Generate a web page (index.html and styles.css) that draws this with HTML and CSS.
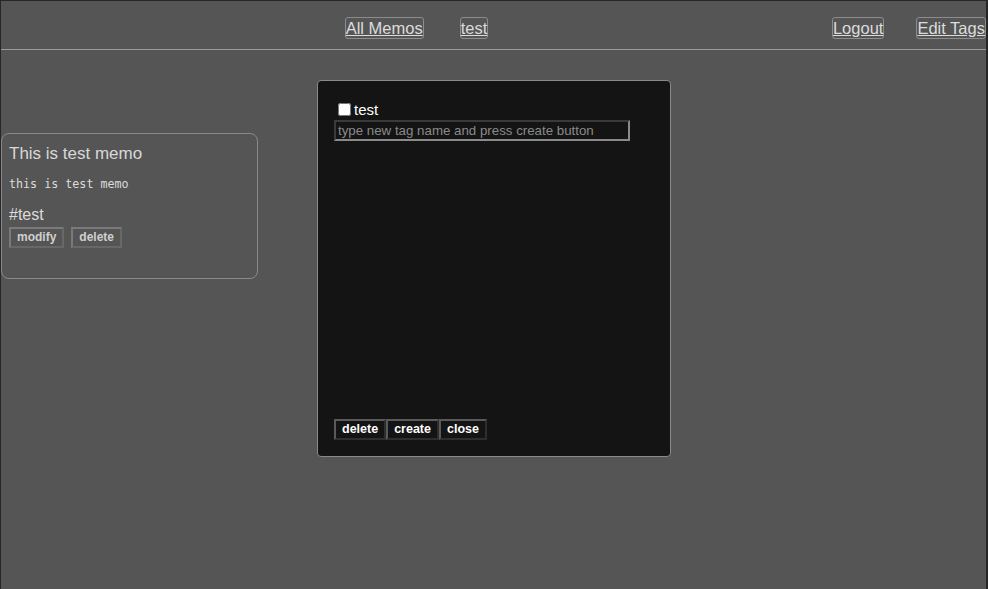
FILE: index.html
```html
<!DOCTYPE html>
<html>
<head>
<meta charset="utf-8">
<link rel="stylesheet" href="styles.css">
</head>
<body>
<header class="topbar">
  <div class="spacer"></div>
  <nav class="nav nav-main">
    <a class="nav-link" href="#">All Memos</a>
    <a class="nav-link" href="#">test</a>
  </nav>
  <nav class="nav nav-user">
    <a class="nav-link" href="#">Logout</a>
    <a class="nav-link" href="#">Edit Tags</a>
  </nav>
</header>
<main class="content">
  <section class="memo">
    <h3 class="memo-title">This is test memo</h3>
    <pre class="memo-body">this is test memo</pre>
    <div class="memo-tag">#test</div>
    <div class="memo-actions">
      <button class="btn">modify</button>
      <button class="btn">delete</button>
    </div>
  </section>
</main>
<div class="modal">
  <label class="tag-option"><input type="checkbox" class="tag-check">test</label>
  <input type="text" class="tag-input" placeholder="type new tag name and press create button">
  <div class="modal-actions"><button class="mbtn">delete</button><button class="mbtn">create</button><button class="mbtn">close</button></div>
</div>
</body>
</html>
```

FILE: styles.css
```css
html {
  background: #262626;
  height: 100%;
}
body {
  margin: 1px 2px 0 1px;
  background: #555555;
  min-height: calc(100vh - 1px);
  font-family: "Liberation Sans", Arial, sans-serif;
  color: #d6d6d6;
}
.topbar {
  display: flex;
  justify-content: space-between;
  align-items: flex-start;
  padding: 16px 0 10px 0;
  border-bottom: 1px solid #9a9a9a;
}
.spacer {
  width: 0;
}
.nav {
  display: flex;
}
.nav-main {
  gap: 36px;
}
.nav-user {
  gap: 32px;
}
.nav-link {
  display: block;
  font-size: 16.5px;
  line-height: 20px;
  color: #dcdcdc;
  text-decoration: underline;
  border: 1px solid #8c8c8c;
  border-radius: 3px;
}
.content {
  padding-top: 83px;
}
.memo {
  width: 255px;
  height: 144px;
  box-sizing: content-box;
  border: 1px solid #8a8a8a;
  border-radius: 8px;
  padding: 0;
}
.memo-title {
  margin: 10px 0 0 7px;
  font-size: 17px;
  line-height: 20px;
  font-weight: normal;
  color: #d8d8d8;
}
.memo-body {
  margin: 13px 0 0 7px;
  font-family: "DejaVu Sans Mono", "Liberation Mono", monospace;
  font-size: 11.7px;
  line-height: 14px;
  color: #dcdcdc;
}
.memo-tag {
  margin: 14px 0 0 7px;
  font-size: 16px;
  line-height: 20px;
  color: #dcdcdc;
}
.memo-actions {
  display: flex;
  gap: 7px;
  margin: 2px 0 0 7px;
}
.btn {
  font-family: "Liberation Sans", Arial, sans-serif;
  font-weight: bold;
  font-size: 12px;
  line-height: 15px;
  padding: 1px 6px;
  background: #555555;
  color: #cfcfcf;
  border: 2px solid;
  border-top-color: #7a7a7a;
  border-left-color: #7a7a7a;
  border-right-color: #686868;
  border-bottom-color: #686868;
}
.modal {
  position: absolute;
  left: 317px;
  top: 80px;
  width: 320px;
  height: 341px;
  padding: 18px 16px 16px 16px;
  background: #141414;
  border: 1px solid #8a8a8a;
  border-radius: 4px;
  display: flex;
  flex-direction: column;
  align-items: flex-start;
}
.tag-option {
  display: flex;
  align-items: center;
  font-size: 15px;
  line-height: 21px;
  color: #ffffff;
}
.tag-check {
  width: 13px;
  height: 13px;
  margin: 3px 3px 3px 4px;
}
.tag-input {
  margin: 0;
  width: 296px;
  height: 21px;
  box-sizing: border-box;
  padding: 1px 2px;
  font-family: "Liberation Sans", Arial, sans-serif;
  font-size: 13.3px;
  background: #141414;
  color: #ffffff;
  border: 2px solid;
  border-top-color: #3a3a3a;
  border-left-color: #3a3a3a;
  border-right-color: #8a8a8a;
  border-bottom-color: #8a8a8a;
  outline: none;
}
.tag-input::placeholder {
  color: #8a8a8a;
}
.modal-actions {
  margin-top: auto;
  display: flex;
}
.mbtn {
  font-family: "Liberation Sans", Arial, sans-serif;
  font-weight: bold;
  font-size: 12.5px;
  line-height: 15px;
  padding: 1px 6px;
  background: #141414;
  color: #ffffff;
  border: 2px solid;
  border-top-color: #5a5a5a;
  border-left-color: #5a5a5a;
  border-right-color: #2e2e2e;
  border-bottom-color: #2e2e2e;
}
```
